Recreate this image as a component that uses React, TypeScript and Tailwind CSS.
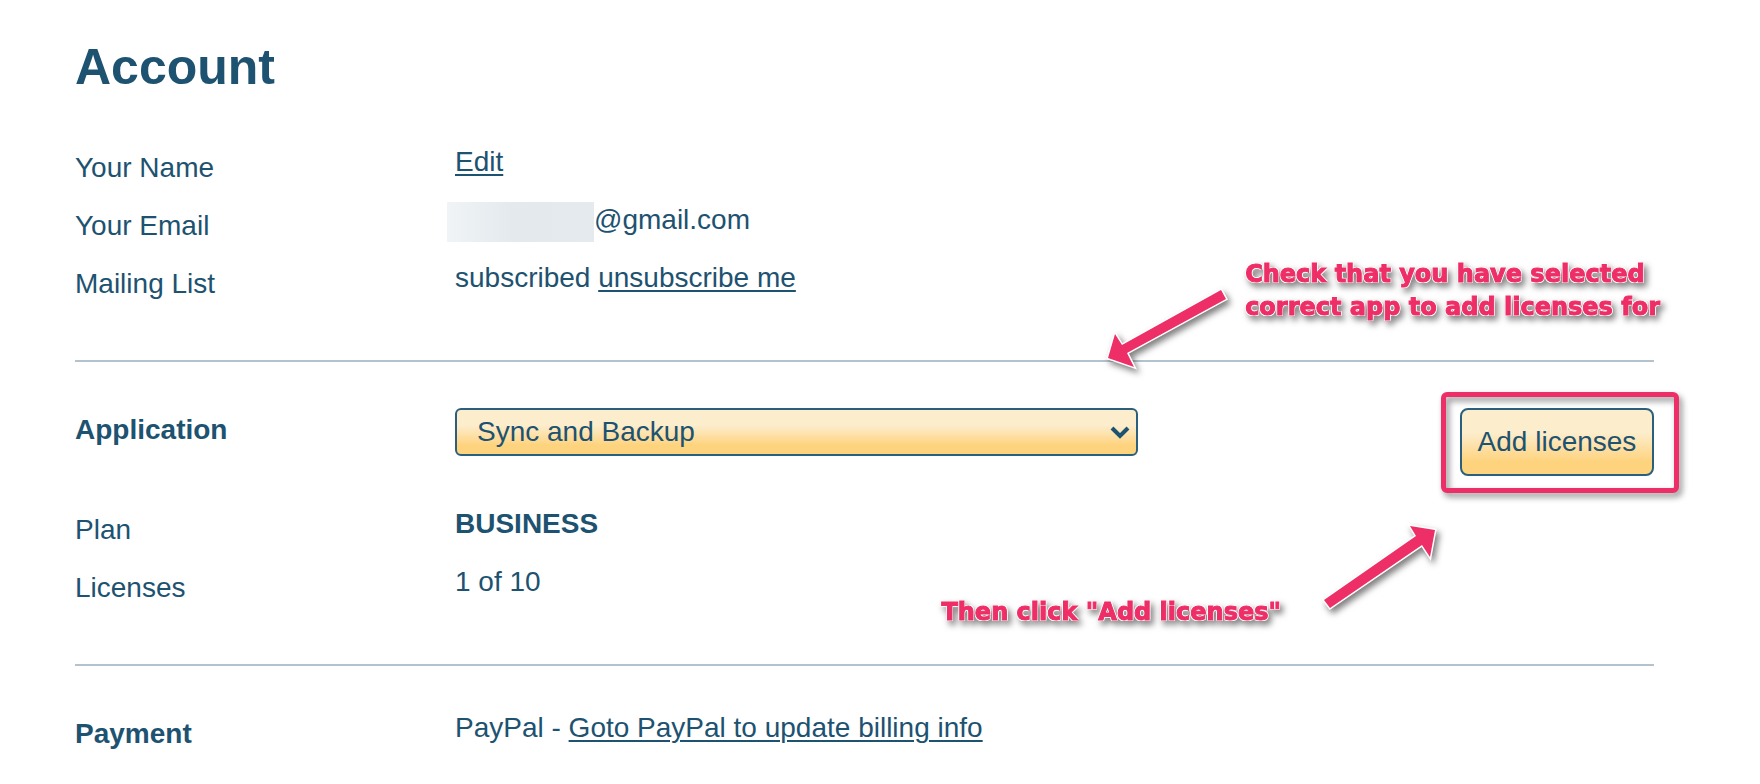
import React, { useState } from 'react';

interface RowProps {
  label: string;
  htmlFor?: string;
  bold?: boolean;
  children: React.ReactNode;
}

const APPS = ['Sync and Backup', 'Planner', 'Time Tracker'];

const linkClass = 'underline decoration-2 underline-offset-3';
const goldClass =
  'border-2 border-[#2a607e] bg-linear-to-b from-[#fcedcc] from-35% to-[#fed37e] to-80%';
const calloutClass =
  "font-['DejaVu_Sans',sans-serif] text-[24px] leading-[33px] font-bold whitespace-nowrap text-[#ee2e66] [-webkit-text-stroke:1px_#ee2e66] [text-shadow:1px_1px_white,-1px_-1px_white,1px_-1px_white,-1px_1px_white,0_1px_white,0_-1px_white,1px_0_white,-1px_0_white] [filter:drop-shadow(3px_4px_3px_rgb(0_0_0/0.5))]";

const Row: React.FC<RowProps> = ({ label, htmlFor, bold, children }) => (
  <div className="flex items-start">
    <div className={`w-[380px] shrink-0 pt-1.5 ${bold ? 'font-bold' : ''}`}>
      {htmlFor ? <label htmlFor={htmlFor}>{label}</label> : label}
    </div>
    <div className="min-w-0 flex-1">{children}</div>
  </div>
);

// Hides the private part of an address
const Redacted: React.FC = () => (
  <span className="-mt-0.5 -mb-1.5 -ml-2 block h-10 w-[147px] bg-linear-to-r from-[#f0f4f6] via-[#e3e9ed] via-45% to-[#e4eaed]" />
);

const Arrow: React.FC<{ points: string; className: string }> = ({ points, className }) => (
  <svg
    viewBox="0 0 120 90"
    aria-hidden="true"
    className={`absolute h-[90px] w-[120px] overflow-visible [filter:drop-shadow(3px_4px_3px_rgb(0_0_0/0.5))] ${className}`}
  >
    <polygon points={points} fill="none" stroke="#fff" strokeWidth="3" />
    <polygon points={points} fill="#ee2e66" />
  </svg>
);

const App: React.FC = () => {
  const [app, setApp] = useState<string>(APPS[0]);

  return (
    <main className="bg-white pt-[39px] pr-[106px] pb-8 pl-[75px] font-['Liberation_Sans',Arial,sans-serif] text-[28px] leading-8 text-[#1d5270]">
      <h1 className="text-[50px] leading-14 font-bold">Account</h1>

      <section className="mt-[51px] flex flex-col gap-5">
        <Row label="Your Name">
          <a href="#edit" className={linkClass}>Edit</a>
        </Row>
        <Row label="Your Email">
          <div className="flex items-start">
            <Redacted />
            <span>@gmail.com</span>
          </div>
        </Row>
        <Row label="Mailing List">
          subscribed <a href="#unsubscribe" className={linkClass}>unsubscribe me</a>
        </Row>
      </section>

      <section className="relative mt-15 border-t-2 border-[#b2c3ce] pt-[46px]">
        <Row label="Application" htmlFor="application" bold>
          <div className="flex items-start justify-between">
            <div className="relative w-[57%]">
              <select
                id="application"
                value={app}
                onChange={(e) => setApp(e.target.value)}
                className={`block h-12 w-full appearance-none rounded-md pl-5 ${goldClass}`}
              >
                {APPS.map((name) => (
                  <option key={name}>{name}</option>
                ))}
              </select>
              <svg viewBox="0 0 20 14" fill="none" aria-hidden="true" className="pointer-events-none absolute top-[18px] right-2 h-[14px] w-5">
                <path d="M2 2l8 8 8-8" stroke="#1d5270" strokeWidth="4" />
              </svg>
            </div>
            <div className="relative">
              <button type="button" className={`block h-17 w-[194px] rounded-lg whitespace-nowrap ${goldClass}`}>
                Add licenses
              </button>
              <div className="pointer-events-none absolute -top-4 -right-[25px] -bottom-[17px] -left-[19px] rounded-md border-5 border-[#ee2e66] [filter:drop-shadow(3px_4px_3px_rgb(0_0_0/0.45))]" />
            </div>
          </div>
        </Row>

        <div className="mt-8 flex flex-col gap-5">
          <Row label="Plan">
            <strong>BUSINESS</strong>
          </Row>
          <Row label="Licenses">1 of 10</Row>
        </div>

        {/* Tips drawn over the form */}
        <p className={`absolute -top-[104px] right-[-6px] ${calloutClass}`}>
          Check that you have selected
          <br />
          correct app to add licenses for
        </p>
        <Arrow points="0,68 7,44 14,55 113,0 118,9 19,63 26,77" className="-top-[72px] right-[426px]" />
        <p className={`absolute top-[234px] right-[373px] ${calloutClass}`}>
          Then click "Add licenses"
        </p>
        <Arrow points="0,73 92,9 86,-1 111,3 106,30 98,18 6,81" className="top-[165px] right-[210px]" />
      </section>

      <section className="mt-15 border-t-2 border-[#b2c3ce] pt-[46px]">
        <Row label="Payment" bold>
          PayPal - <a href="#paypal" className={linkClass}>Goto PayPal to update billing info</a>
        </Row>
      </section>
    </main>
  );
};

export default App;
